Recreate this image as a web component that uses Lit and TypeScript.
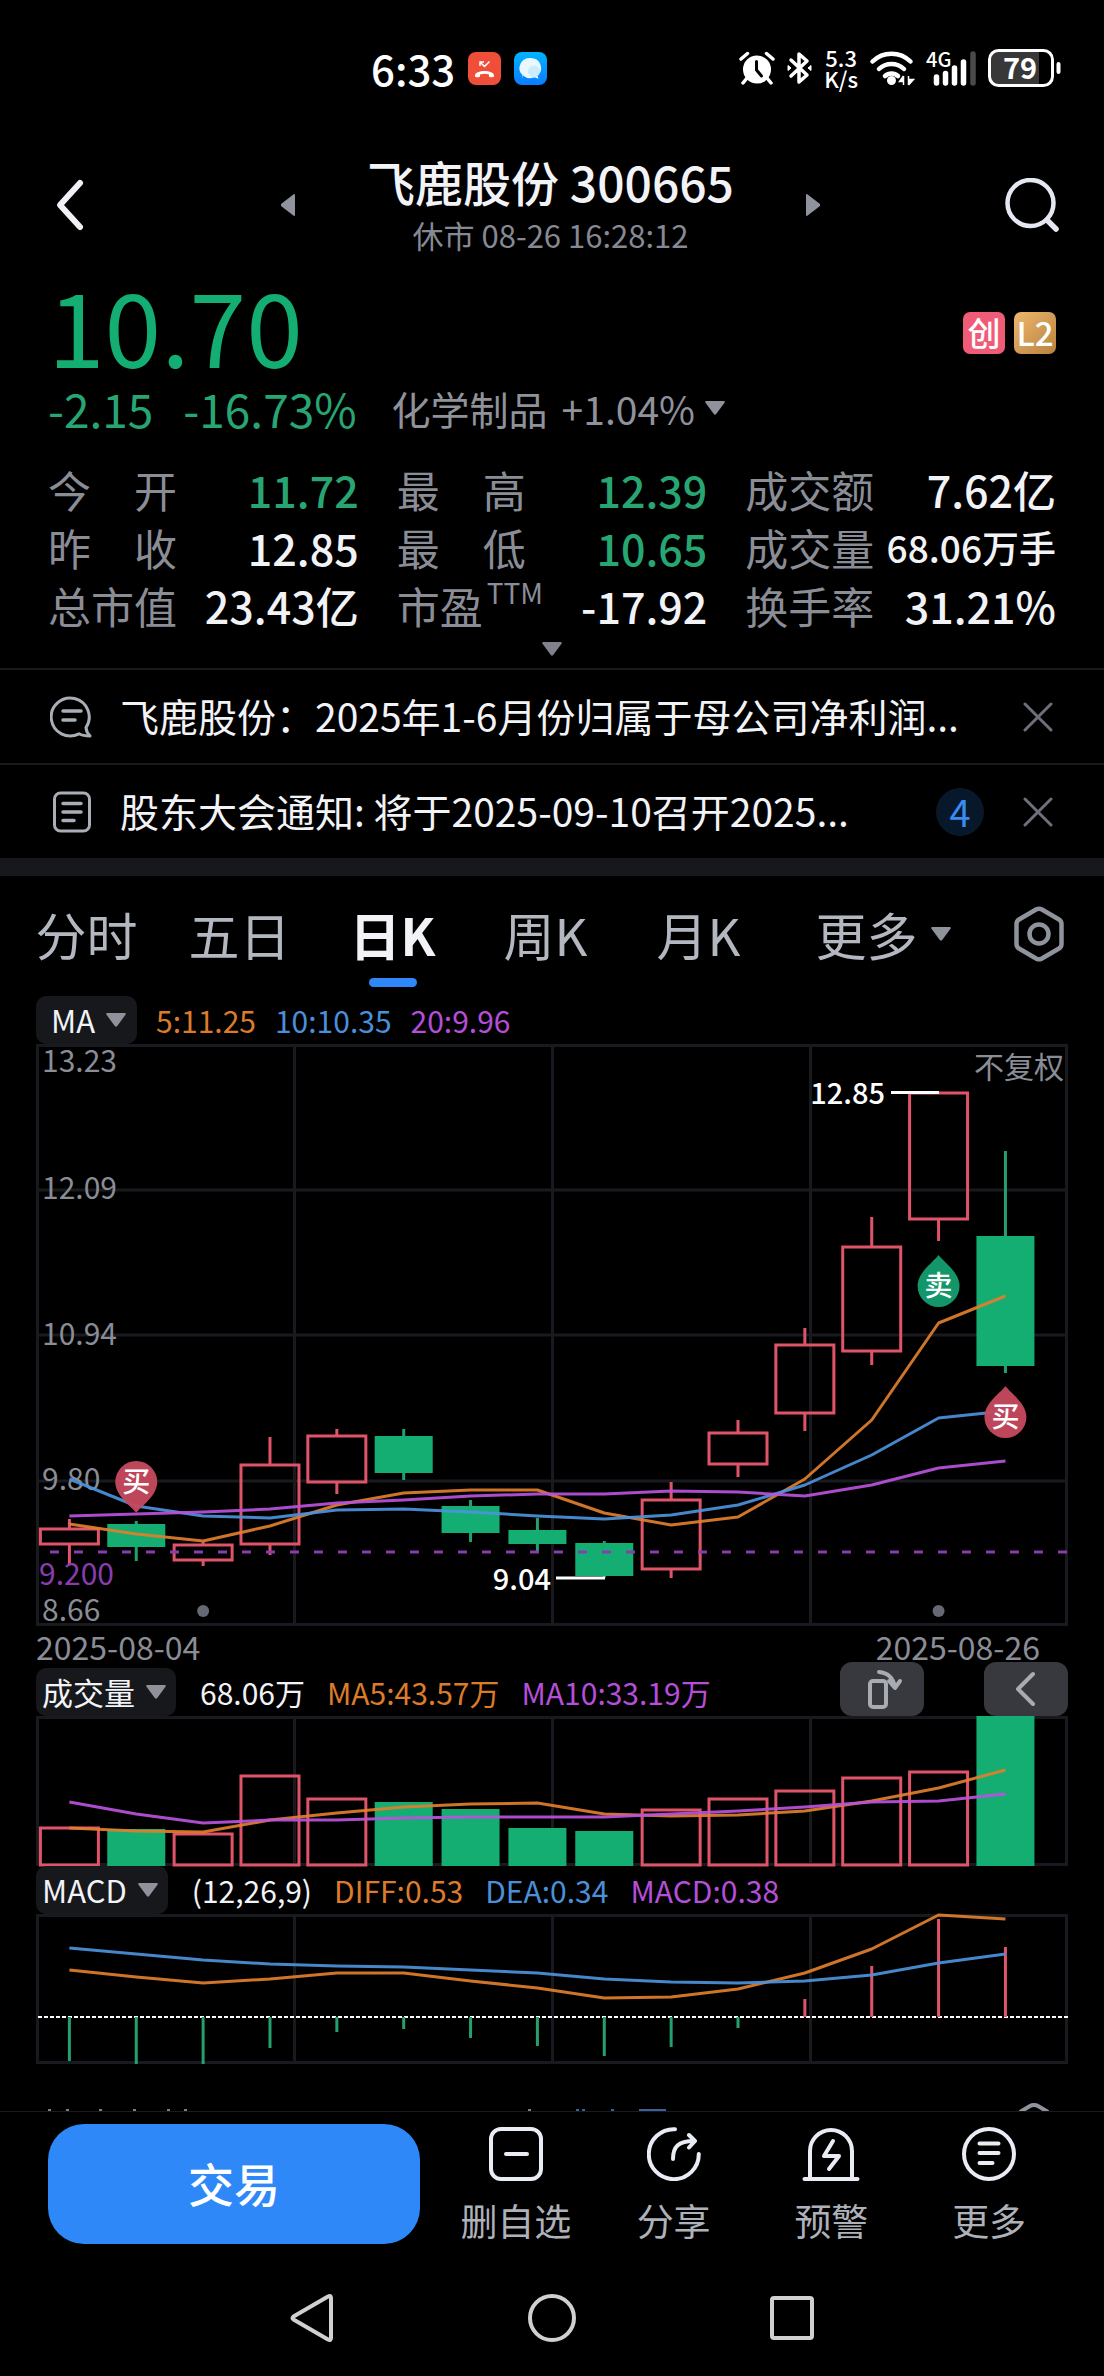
import { LitElement, html, svg, css } from "lit";
import { customElement, property, state } from "lit/decorators.js";
import { classMap } from "lit/directives/class-map.js";

type Tone = "up" | "down" | "plain";

interface Candle {
  rise: boolean;
  top: number;
  bottom: number;
  high: number;
  low: number;
}

const WIDTH = 1032;
const STEP = 66.86;
const FIRST = 33.4;
const centre = (i: number) => FIRST + STEP * i;

const candle = (rise: boolean, top: number, bottom: number, high: number, low: number): Candle => ({
  rise,
  top,
  bottom,
  high,
  low,
});

const CANDLES: Candle[] = [
  candle(true, 485, 500, 475, 520),
  candle(false, 480, 503, 477, 517),
  candle(true, 501, 516, 498, 522),
  candle(true, 421, 500, 393, 511),
  candle(true, 392, 438, 385, 450),
  candle(false, 392, 429, 385, 436),
  candle(false, 462, 489, 456, 498),
  candle(false, 486, 500, 474, 507),
  candle(false, 499, 532, 497, 534),
  candle(true, 456, 525, 438, 534),
  candle(true, 389, 420, 376, 433),
  candle(true, 301, 369, 284, 387),
  candle(true, 203, 307, 173, 321),
  candle(true, 49, 175, 49, 197),
  candle(false, 192, 322, 107, 329),
];

const MA5 = [480, 490, 497, 482, 461, 449, 446, 446, 469, 481, 473, 435, 376, 279, 252];
const MA10 = [435, 462, 472, 474, 466, 465, 468, 472, 475, 471, 461, 441, 411, 374, 367];
const MA20 = [472, 470, 468, 465, 459, 456, 452, 450, 450, 447, 448, 452, 441, 424, 417];

const VOLUME_TOPS = [112, 113, 118, 60, 83, 86, 93, 112, 115, 94, 83, 75, 62, 56, 0];
const VOLUME_MA5 = [112, 115, 116, 104, 97, 91, 88, 87, 98, 100, 99, 95, 85, 72, 54];
const VOLUME_MA10 = [86, 98, 107, 104, 104, 102, 101, 101, 101, 98, 95, 91, 86, 85, 78];

const DIFF = [56, 63, 69, 65, 59, 59, 67, 74, 84, 83, 75, 59, 35, 1, 5];
const DEA = [34, 40, 46, 50, 52, 53, 56, 59, 65, 68, 69, 67, 61, 49, 40];
const MACD_ZERO = 103;
const MACD_ENDS = [147, 150, 150, 134, 118, 115, 124, 132, 142, 133, 114, 85, 52, 5, 33];

const STATS: { label: string; sup?: string; value: string; tone: Tone; small?: boolean }[] = [
  { label: "今　开", value: "11.72", tone: "down" },
  { label: "最　高", value: "12.39", tone: "down" },
  { label: "成交额", value: "7.62亿", tone: "plain" },
  { label: "昨　收", value: "12.85", tone: "plain" },
  { label: "最　低", value: "10.65", tone: "down" },
  { label: "成交量", value: "68.06万手", tone: "plain", small: true },
  { label: "总市值", value: "23.43亿", tone: "plain" },
  { label: "市盈", sup: "TTM", value: "-17.92", tone: "plain" },
  { label: "换手率", value: "31.21%", tone: "plain" },
];

const chartStyles = css`
  :host {
    display: block;
  }
  svg {
    display: block;
    width: 100%;
    height: auto;
    overflow: visible;
  }
  .grid {
    fill: none;
    stroke: #191a1f;
    stroke-width: 3;
  }
  .rise {
    fill: none;
    stroke: #e0546a;
    stroke-width: 3;
  }
  .fall {
    fill: #14ae73;
  }
  .fall-wick {
    stroke: #24a06f;
    stroke-width: 3;
  }
  .line {
    fill: none;
    stroke-width: 3;
    stroke-linejoin: round;
    opacity: 0.92;
  }
  .orange {
    stroke: #e07f2c;
  }
  .blue {
    stroke: #4c93dc;
  }
  .purple {
    stroke: #b953dc;
  }
`;

const polyline = (values: number[], colour: string) => svg`
  <polyline class="line ${colour}" points=${values.map((y, i) => `${centre(i)},${y}`).join(" ")}></polyline>`;

const verticals = (height: number) => [258, 516, 774].map(
  (x) => svg`<line class="grid" x1=${x + 0.5} x2=${x + 0.5} y1="0" y2=${height}></line>`,
);

const frame = (height: number) => svg`
  <rect class="grid" x="1.5" y="1.5" width=${WIDTH - 3} height=${height - 3}></rect>`;

const triangle = (className = "tri") => html`
  <svg class=${className} viewBox="0 0 20 14" width="20" height="14" aria-hidden="true">
    <path d="M1.500 0h17q2 0 1 1.800L11.200 13q-1.200 1.300-2.400 0L.5 1.800Q-.5 0 1.500 0z" fill="currentColor"></path>
  </svg>`;

@customElement("price-chart")
export class PriceChart extends LitElement {
  static styles = [
    chartStyles,
    css`
      text {
        font-family: "Noto Sans CJK SC", sans-serif;
        font-size: 30px;
      }
      .axis {
        fill: #8a8d96;
      }
      .level {
        fill: #8a3cae;
      }
      .level-line {
        stroke: #8a3cae;
        stroke-width: 3;
        stroke-dasharray: 9 15;
      }
      .peak {
        fill: #ffffff;
        font-size: 29px;
        font-weight: 500;
      }
      .peak-line {
        stroke: #ffffff;
        stroke-width: 3;
      }
      .dot {
        fill: #666873;
      }
      .pin-text {
        fill: #ffffff;
        font-size: 28px;
        font-weight: 500;
      }
      .buy {
        fill: #c5495f;
        opacity: 0.96;
      }
      .sell {
        fill: #13966a;
      }
    `,
  ];

  private pin(x: number, y: number, kind: "buy" | "sell", label: string, up: boolean) {
    const d = up
      ? "M0-31C4-25 21-14 21 0A21 21 0 0 1-21 0C-21-14-4-25 0-31z"
      : "M0 31C4 25 21 14 21 0A21 21 0 0 0-21 0C-21 14-4 25 0 31z";
    return svg`
      <g transform="translate(${x} ${y})">
        <path class=${kind} d=${d}></path>
        <text class="pin-text" text-anchor="middle" y="10">${label}</text>
      </g>`;
  }

  render() {
    return html`
      <svg viewBox="0 0 ${WIDTH} 582" role="img" aria-label="日K">
        ${frame(582)} ${verticals(582)}
        ${[146, 291, 437].map((y) => svg`<line class="grid" x1="0" x2=${WIDTH} y1=${y} y2=${y}></line>`)}
        <text class="axis" x="6" y="28">13.23</text>
        <text class="axis" x="6" y="155">12.09</text>
        <text class="axis" x="6" y="301">10.94</text>
        <text class="axis" x="6" y="446">9.80</text>
        <text class="axis" x="6" y="577">8.66</text>
        <text class="axis" x="1028" y="34" text-anchor="end">不复权</text>
        ${CANDLES.map((c, i) => {
          const x = centre(i);
          return c.rise
            ? svg`
                <rect class="rise" x=${x - 29} y=${c.top} width="58" height=${c.bottom - c.top}></rect>
                <line class="rise" x1=${x} x2=${x} y1=${c.high} y2=${c.top}></line>
                <line class="rise" x1=${x} x2=${x} y1=${c.bottom} y2=${c.low}></line>`
            : svg`
                <line class="fall-wick" x1=${x} x2=${x} y1=${c.high} y2=${c.low}></line>
                <rect class="fall" x=${x - 29} y=${c.top} width="58" height=${c.bottom - c.top}></rect>`;
        })}
        ${polyline(MA5, "orange")} ${polyline(MA10, "blue")} ${polyline(MA20, "purple")}
        <line class="level-line" x1="14" x2=${WIDTH} y1="508" y2="508"></line>
        <text class="level" x="3" y="541">9.200</text>
        <line class="peak-line" x1="855" x2="903" y1="48.500" y2="48.500"></line>
        <text class="peak" x="849" y="60" text-anchor="end">12.85</text>
        <line class="peak-line" x1="520" x2="569" y1="534" y2="534"></line>
        <text class="peak" x="515" y="546" text-anchor="end">9.04</text>
        <circle class="dot" cx=${centre(2)} cy="567" r="6"></circle>
        <circle class="dot" cx=${centre(13)} cy="567" r="6"></circle>
        ${this.pin(centre(1), 438, "buy", "买", false)}
        ${this.pin(centre(13), 242, "sell", "卖", true)}
        ${this.pin(centre(14), 373, "buy", "买", true)}
      </svg>`;
  }
}

@customElement("volume-chart")
export class VolumeChart extends LitElement {
  static styles = chartStyles;

  render() {
    return html`
      <svg viewBox="0 0 ${WIDTH} 150" role="img" aria-label="成交量">
        ${frame(150)} ${verticals(150)}
        ${VOLUME_TOPS.map((top, i) =>
          CANDLES[i].rise
            ? svg`<rect class="rise" x=${centre(i) - 29} y=${top} width="58" height=${149 - top}></rect>`
            : svg`<rect class="fall" x=${centre(i) - 29} y=${top} width="58" height=${150 - top}></rect>`,
        )}
        ${polyline(VOLUME_MA5, "orange")} ${polyline(VOLUME_MA10, "purple")}
      </svg>`;
  }
}

@customElement("macd-chart")
export class MacdChart extends LitElement {
  static styles = [
    chartStyles,
    css`
      .zero {
        stroke: #ffffff;
        stroke-width: 2;
        stroke-dasharray: 4 2;
      }
    `,
  ];

  render() {
    return html`
      <svg viewBox="0 0 ${WIDTH} 150" role="img" aria-label="MACD">
        ${frame(150)} ${verticals(150)}
        <line class="zero" x1="2" x2=${WIDTH} y1=${MACD_ZERO} y2=${MACD_ZERO}></line>
        ${MACD_ENDS.map(
          (end, i) => svg`
            <line class=${end < MACD_ZERO ? "rise" : "fall-wick"}
              x1=${centre(i)} x2=${centre(i)} y1=${MACD_ZERO} y2=${end}></line>`,
        )}
        ${polyline(DIFF, "orange")} ${polyline(DEA, "blue")}
      </svg>`;
  }
}

@customElement("status-bar")
export class StatusBar extends LitElement {
  static styles = css`
    :host {
      display: flex;
      align-items: center;
      justify-content: space-between;
      height: 136px;
      padding: 0 43px 0 33.6%;
      box-sizing: border-box;
      color: #ffffff;
    }
    .group {
      display: flex;
      align-items: center;
    }
    .left {
      gap: 13px;
    }
    .right {
      gap: 12px;
    }
    .time {
      font-size: 42px;
      line-height: 50px;
      font-weight: 500;
    }
    .speed {
      display: flex;
      flex-direction: column;
      align-items: center;
      font-size: 22px;
      line-height: 21px;
      font-weight: 500;
    }
    svg {
      display: block;
      overflow: visible;
    }
    .small {
      font-family: "Noto Sans CJK SC", sans-serif;
      font-size: 20px;
      font-weight: 500;
      fill: #ffffff;
    }
    .level {
      font-family: "Noto Sans CJK SC", sans-serif;
      font-size: 29px;
      font-weight: 700;
      fill: #ffffff;
    }
  `;

  render() {
    return html`
      <div class="group left">
        <span class="time">6:33</span>
        <svg width="33" height="33" viewBox="0 0 33 33" aria-hidden="true">
          <rect width="33" height="33" rx="8" fill="#f04e38"></rect>
          <path d="M7 23.500c0-6 19-6 19 0v1c0 1-5 1-5 0v-2q-4.500-1.500-9 0v2c0 1-5 1-5 0z" fill="#fff"></path>
          <path d="M12 14v-4h4M12.500 10.500l4 4 5-5" fill="none" stroke="#fff" stroke-width="1.500"></path>
        </svg>
        <svg width="33" height="33" viewBox="0 0 33 33" aria-hidden="true">
          <defs>
            <linearGradient id="chat" x1="0" y1="0" x2="0" y2="1">
              <stop offset="0" stop-color="#00b4ff"></stop>
              <stop offset="1" stop-color="#0a7cff"></stop>
            </linearGradient>
          </defs>
          <rect width="33" height="33" rx="8" fill="url(#chat)"></rect>
          <path d="M16.500 6a10.500 10 0 0 1 7 17.500l1 3.200-4.200-1.500A10.500 10 0 0 1 9 23.500L8 26.500l.5-3.500A10.500 10 0 0 1 16.500 6z" fill="#e9f7ff"></path>
          <circle cx="20" cy="19.500" r="6" fill="#bfe6ff" opacity=".7"></circle>
        </svg>
      </div>
      <div class="group right">
        <svg width="36" height="34" viewBox="0 0 36 34" aria-hidden="true">
          <circle cx="18" cy="18.500" r="14" fill="#fff"></circle>
          <path d="M2 8l6.500-5.500M34 8l-6.500-5.500M8 27l-4 5M28 27l4 5" stroke="#fff" stroke-width="3.500" stroke-linecap="round"></path>
          <path d="M17.500 10.500V19l5 6" fill="none" stroke="#000" stroke-width="3" stroke-linecap="round" stroke-linejoin="round"></path>
        </svg>
        <svg width="25" height="34" viewBox="0 0 25 34" aria-hidden="true">
          <path d="M4 9l16 15-8 7V3l8 7L4 25" fill="none" stroke="#fff" stroke-width="3.500" stroke-linejoin="round" stroke-linecap="round"></path>
          <path d="M1 14.500l3 2.500-3 2.500zM24 14.500L21 17l3 2.500z" fill="#fff" stroke="#fff"></path>
        </svg>
        <span class="speed"><span>5.3</span><span>K/s</span></span>
        <svg width="44" height="34" viewBox="0 0 44 34" aria-hidden="true">
          <path d="M2.500 10.500a27 27 0 0 1 38 0M9 18a18 18 0 0 1 25 0M15 25a9.500 9.500 0 0 1 13 0" fill="none" stroke="#fff" stroke-width="4.500" stroke-linecap="round"></path>
          <circle cx="21.500" cy="29.500" r="4.500" fill="#fff"></circle>
          <path d="M33.500 25v9M33.500 25l-4 5.500h4M38.500 34v-9M38.500 34l5-5.500h-5" stroke="#fff" stroke-width="1.500" fill="#fff"></path>
        </svg>
        <svg width="50" height="36" viewBox="0 0 50 36" role="img" aria-label="4G">
          <text class="small" x="0" y="17">4G</text>
          <path d="M10.500 27v6M19.500 23.500v9.500M28.500 18v15M37.500 12v21" stroke="#fff" stroke-width="5.500" stroke-linecap="round"></path>
          <path d="M47 4v29" stroke="#4a4a4a" stroke-width="5.500" stroke-linecap="round"></path>
        </svg>
        <svg width="73" height="38" viewBox="0 0 73 38" role="img" aria-label="79%">
          <path d="M10 2h41v34H10a8 8 0 0 1-8-8V10a8 8 0 0 1 8-8z" fill="#383838"></path>
          <rect x="1.500" y="1.500" width="63" height="35" rx="9" fill="none" stroke="#fff" stroke-width="3"></rect>
          <rect x="68.500" y="13" width="4" height="12" rx="2" fill="#fff"></rect>
          <text class="level" x="32" y="30" text-anchor="middle">79</text>
        </svg>
      </div>`;
  }
}

@customElement("notice-row")
export class NoticeRow extends LitElement {
  static styles = css`
    :host {
      display: flex;
      align-items: center;
      height: 93px;
      padding: 0 50px;
      border-top: 2px solid #191a1e;
    }
    .icon {
      flex: none;
      width: 42px;
      height: 42px;
      margin-right: 28px;
      color: #a9adb5;
    }
    .title {
      flex: 1;
      min-width: 0;
      padding-bottom: 4px;
      overflow: hidden;
      white-space: nowrap;
      color: #f2f3f7;
      font-size: 39px;
      line-height: 56px;
      text-decoration: none;
    }
    .count {
      flex: none;
      width: 48px;
      height: 48px;
      margin-right: 38px;
      border-radius: 24px;
      background: #08182b;
      color: #3a8bf0;
      font-size: 38px;
      line-height: 46px;
      text-align: center;
    }
    .close {
      flex: none;
      display: grid;
      place-items: center;
      width: 32px;
      height: 48px;
      padding: 0;
      border: 0;
      background: none;
      color: #6d707a;
    }
  `;

  @property() kind = "comment";
  @property() text = "";
  @property() count = "";

  render() {
    return html`
      ${this.kind === "comment"
        ? html`<svg class="icon" viewBox="0 0 42 42" aria-hidden="true">
            <path d="M36 31.500A19 19 0 1 0 29 37.800Q33 40 40 40 36.500 37 36 31.500z" fill="none" stroke="currentColor" stroke-width="3" stroke-linejoin="round"></path>
            <path d="M13 15h18M13 24h12" stroke="currentColor" stroke-width="3.500" stroke-linecap="round"></path>
          </svg>`
        : html`<svg class="icon" viewBox="0 0 42 42" aria-hidden="true">
            <rect x="4.500" y="2" width="35" height="38" rx="6" fill="none" stroke="currentColor" stroke-width="3"></rect>
            <path d="M13 12.500h18M13 21h18M13 29.500h11" stroke="currentColor" stroke-width="3.500" stroke-linecap="round"></path>
          </svg>`}
      <a class="title" href="#notice">${this.text}</a>
      ${this.count ? html`<span class="count">${this.count}</span>` : ""}
      <button class="close" aria-label="关闭">
        <svg width="30" height="30" viewBox="0 0 30 30" aria-hidden="true">
          <path d="M2 2l26 26M28 2L2 28" stroke="currentColor" stroke-width="3" stroke-linecap="round"></path>
        </svg>
      </button>`;
  }
}

@customElement("app-root")
export class AppRoot extends LitElement {
  static styles = css`
    :host {
      display: flex;
      flex-direction: column;
      min-height: 100vh;
      background: #000000;
      color: #f2f3f7;
      font-family: "Noto Sans CJK SC", "Noto Sans", sans-serif;
    }
    button {
      margin: 0;
      padding: 0;
      border: 0;
      background: none;
      color: inherit;
      font: inherit;
    }
    svg {
      display: block;
      flex: none;
    }
    .header {
      display: flex;
      align-items: center;
      justify-content: space-between;
      height: 138px;
      padding: 0 45px 0 48px;
    }
    .switcher {
      display: flex;
      align-items: center;
      gap: 72px;
      color: #8f939d;
    }
    .heading {
      display: flex;
      flex-direction: column;
      align-items: center;
    }
    .name {
      margin: 0;
      color: #f2f3f7;
      font-size: 48px;
      line-height: 60px;
      font-weight: 500;
      white-space: nowrap;
    }
    .time {
      color: #868993;
      font-size: 31px;
      line-height: 48px;
      white-space: nowrap;
    }
    .quote {
      display: flex;
      justify-content: space-between;
      padding: 0 48px;
    }
    .price {
      color: #14ae73;
      font-size: 102px;
      line-height: 100px;
    }
    .badges {
      display: flex;
      gap: 9px;
      padding-top: 38px;
    }
    .badge {
      width: 42px;
      height: 42px;
      border-radius: 7px;
      color: #ffffff;
      font-size: 33px;
      line-height: 40px;
      font-weight: 500;
      text-align: center;
    }
    .board {
      background: #f05b78;
    }
    .depth {
      background: linear-gradient(135deg, #efb66c, #b8833f);
    }
    .change {
      display: flex;
      align-items: center;
      height: 68px;
      padding: 0 48px;
      color: #27a673;
      font-size: 46px;
    }
    .amount {
      margin-right: 30px;
    }
    .sector {
      display: flex;
      align-items: center;
      gap: 10px;
      margin-left: 35px;
      color: #8f929b;
      font-size: 39px;
    }
    .sector-name {
      margin-right: 4px;
    }
    .stats {
      display: grid;
      grid-template-columns: repeat(3, 1fr);
      column-gap: 38px;
      margin: 18px 0 0;
      padding: 0 48px;
    }
    .stat {
      display: flex;
      align-items: center;
      justify-content: space-between;
      height: 58px;
      white-space: nowrap;
    }
    .label {
      color: #8a8d96;
      font-size: 43px;
      line-height: 58px;
    }
    .sup {
      font-size: 28px;
      line-height: 28px;
      vertical-align: 20px;
      margin-left: 4px;
    }
    .value {
      margin: 0;
      font-size: 43px;
      line-height: 58px;
      font-weight: 500;
    }
    .compact {
      font-size: 37px;
    }
    .down {
      color: #27a673;
    }
    .expand {
      display: grid;
      place-items: center;
      width: 100%;
      height: 34px;
      padding-bottom: 4px;
      color: #7f828d;
    }
    .band {
      height: 18px;
      background: #17181c;
    }
    .tabs {
      display: grid;
      grid-template-columns: repeat(5, 153fr) 216fr 95fr;
      height: 120px;
      padding: 0 18px 0 10px;
    }
    .tab {
      display: flex;
      flex-direction: column;
      align-items: center;
      gap: 6px;
      padding-top: 20px;
      color: #b3b7c0;
      font-size: 51px;
      line-height: 76px;
      white-space: nowrap;
    }
    .tab::after {
      content: "";
      width: 48px;
      height: 9px;
      border-radius: 5px;
    }
    .active {
      color: #f2f3f7;
      font-weight: 700;
    }
    .active::after {
      background: #2f88f7;
    }
    .more {
      display: flex;
      align-items: center;
      gap: 13px;
      color: #8f929b;
    }
    .more-text {
      color: #b3b7c0;
    }
    .settings {
      display: grid;
      place-items: center;
      height: 116px;
      color: #8f939c;
    }
    .charts {
      padding: 0 36px;
    }
    .legend {
      display: flex;
      height: 48px;
      font-size: 30px;
      line-height: 48px;
      white-space: nowrap;
    }
    .picker {
      display: flex;
      align-items: center;
      gap: 11px;
      padding: 0 10px 0 6px;
      border-radius: 10px;
      background: #17181c;
      color: #f2f3f7;
      font-size: 31px;
      line-height: 46px;
    }
    .picker-wide {
      padding: 0 11px 0 15px;
    }
    .picker .tri,
    .more .tri {
      color: #8f929b;
    }
    .readings {
      display: flex;
      gap: 22px;
      margin-left: 24px;
    }
    .readings-near {
      gap: 19px;
      margin-left: 19px;
    }
    .orange {
      color: #dc7c2b;
    }
    .blue {
      color: #4a90d9;
    }
    .purple {
      color: #b54fd9;
    }
    .dates {
      display: flex;
      justify-content: space-between;
      height: 42px;
      padding-right: 28px;
      color: #8a8d96;
      font-size: 32px;
      line-height: 40px;
    }
    .tools {
      display: flex;
      align-items: flex-end;
      gap: 60px;
      margin-left: auto;
    }
    .tool {
      width: 84px;
      height: 54px;
      border-radius: 12px;
      background: #38393e;
      color: #a9abb2;
    }
    .peek {
      flex: 1;
      display: flex;
      align-items: flex-end;
      min-height: 47px;
    }
    .peek svg {
      width: 100%;
      height: auto;
    }
    .footer {
      display: flex;
      gap: 17px;
      padding: 12px 36px 14px 48px;
      border-top: 1px solid #191a1e;
    }
    .trade {
      flex: 372;
      height: 120px;
      padding-bottom: 5px;
      border-radius: 36px;
      background: #2e88f7;
      color: #ffffff;
      font-size: 46px;
      font-weight: 500;
    }
    .actions {
      flex: 631;
      display: grid;
      grid-template-columns: repeat(4, 1fr);
    }
    .action {
      display: flex;
      flex-direction: column;
      align-items: center;
      gap: 14px;
      padding-top: 3px;
      color: #aeb1b9;
      font-size: 37px;
      line-height: 50px;
      white-space: nowrap;
    }
    .action svg {
      color: #e9ecf4;
    }
    .system {
      display: flex;
      align-items: center;
      justify-content: center;
      gap: 192px;
      height: 118px;
      color: #d0d0d0;
    }
  `;

  @state() private tab = "日K";

  private icon(width: number, paths: unknown) {
    return html`<svg width=${width} height="54" viewBox="0 0 ${width} 54" fill="none" stroke="currentColor"
      stroke-width="4" stroke-linecap="round" stroke-linejoin="round" aria-hidden="true">${paths}</svg>`;
  }

  render() {
    const tabs = ["分时", "五日", "日K", "周K", "月K"];
    return html`
      <status-bar></status-bar>
      <header class="header">
        <button aria-label="返回">
          <svg width="48" height="54" viewBox="0 0 48 54" aria-hidden="true">
            <path d="M32 5L12 27l20 22" fill="none" stroke="#f0f1f6" stroke-width="6" stroke-linecap="round" stroke-linejoin="round"></path>
          </svg>
        </button>
        <div class="switcher">
          <button aria-label="上一只">
            <svg width="14" height="22" viewBox="0 0 14 22" aria-hidden="true"><path d="M13 0q1 0 1 1v20q0 1-1 1L0 12q-.5-1 0-2z" fill="currentColor"></path></svg>
          </button>
          <div class="heading">
            <h1 class="name">飞鹿股份 300665</h1>
            <span class="time">休市 08-26 16:28:12</span>
          </div>
          <button aria-label="下一只">
            <svg width="14" height="22" viewBox="0 0 14 22" aria-hidden="true"><path d="M1 0Q0 0 0 1v20q0 1 1 1l13-10q.5-1 0-2z" fill="currentColor"></path></svg>
          </button>
        </div>
        <button aria-label="搜索">
          <svg width="54" height="54" viewBox="0 0 54 54" aria-hidden="true">
            <circle cx="25.500" cy="25" r="23" fill="none" stroke="#e4e8f0" stroke-width="4.500"></circle>
            <path d="M42 42l9 9" stroke="#e4e8f0" stroke-width="5.500" stroke-linecap="round"></path>
          </svg>
        </button>
      </header>

      <section class="quote">
        <span class="price">10.70</span>
        <span class="badges"><span class="badge board">创</span><span class="badge depth">L2</span></span>
      </section>
      <div class="change">
        <span class="amount">-2.15</span><span>-16.73%</span>
        <button class="sector"><span class="sector-name">化学制品</span><span>+1.04%</span>${triangle()}</button>
      </div>
      <dl class="stats">
        ${STATS.map(
          (s) => html`<div class="stat">
            <dt class="label">${s.label}${s.sup ? html`<span class="sup">${s.sup}</span>` : ""}</dt>
            <dd class=${classMap({ value: true, down: s.tone === "down", compact: !!s.small })}>${s.value}</dd>
          </div>`,
        )}
      </dl>
      <button class="expand" aria-label="展开">${triangle()}</button>

      <notice-row kind="comment" text="飞鹿股份：2025年1-6月份归属于母公司净利润..."></notice-row>
      <notice-row kind="document" text="股东大会通知: 将于2025-09-10召开2025..." count="4"></notice-row>
      <div class="band"></div>

      <nav class="tabs">
        ${tabs.map(
          (t) => html`<button class=${classMap({ tab: true, active: this.tab === t })} @click=${() => (this.tab = t)}>${t}</button>`,
        )}
        <button class="tab"><span class="more"><span class="more-text">更多</span>${triangle()}</span></button>
        <button class="settings" aria-label="设置">
          <svg width="50" height="56" viewBox="0 0 50 56" fill="none" stroke="currentColor" stroke-width="4.500" stroke-linejoin="round" aria-hidden="true">
            <path d="M22.500 3.300Q25 2 27.500 3.300L45 13.500Q47.500 15 47.500 18V38q0 3-2.500 4.500L27.500 52.700Q25 54 22.500 52.700L5 42.500Q2.500 41 2.500 38V18q0-3 2.500-4.500z"></path>
            <circle cx="25" cy="28" r="9.500"></circle>
          </svg>
        </button>
      </nav>

      <main class="charts">
        <div class="legend">
          <button class="picker picker-wide"><span>MA</span>${triangle()}</button>
          <span class="readings readings-near">
            <span class="orange">5:11.25</span><span class="blue">10:10.35</span><span class="purple">20:9.96</span>
          </span>
        </div>
        <price-chart></price-chart>
        <div class="dates"><span>2025-08-04</span><span>2025-08-26</span></div>

        <div class="legend">
          <button class="picker"><span>成交量</span>${triangle()}</button>
          <span class="readings">
            <span>68.06万</span><span class="orange">MA5:43.57万</span><span class="purple">MA10:33.19万</span>
          </span>
          <span class="tools">
            <button class="tool" aria-label="横屏">
              <svg width="84" height="54" viewBox="0 0 84 54" fill="none" stroke="currentColor" stroke-width="4" stroke-linecap="round" stroke-linejoin="round" aria-hidden="true">
                <rect x="30" y="19" width="16" height="26" rx="3"></rect>
                <path d="M39 10Q52 11 55 25M49 19l6 7 5-7"></path>
              </svg>
            </button>
            <button class="tool" aria-label="收起">
              <svg width="84" height="54" viewBox="0 0 84 54" fill="none" stroke="currentColor" stroke-width="4" stroke-linecap="round" stroke-linejoin="round" aria-hidden="true">
                <path d="M49 12L34 27l15 15"></path>
              </svg>
            </button>
          </span>
        </div>
        <volume-chart></volume-chart>

        <div class="legend">
          <button class="picker"><span>MACD</span>${triangle()}</button>
          <span class="readings">
            <span>(12,26,9)</span><span class="orange">DIFF:0.53</span><span class="blue">DEA:0.34</span><span class="purple">MACD:0.38</span>
          </span>
        </div>
        <macd-chart></macd-chart>
      </main>

      <div class="peek">
        <svg viewBox="0 0 1104 8" aria-hidden="true">
          <path d="M48 7h3M66 7h3M99 7h3M133 7h3M167 7h3M184 7h3M528 7h3" stroke="#7c7f88" stroke-width="2"></path>
          <path d="M576 7h3M582 7h3M611 7h3M639 7h27" stroke="#37649b" stroke-width="2"></path>
          <path d="M1020 9l10-6q4-2 8 0l10 6" fill="none" stroke="#8f939c" stroke-width="4"></path>
        </svg>
      </div>

      <footer class="footer">
        <button class="trade">交易</button>
        <div class="actions">
          <button class="action">
            ${this.icon(54, svg`<rect x="2" y="2" width="50" height="50" rx="10"></rect><path d="M17 27h21"></path>`)}
            <span>删自选</span>
          </button>
          <button class="action">
            ${this.icon(54, svg`<path d="M28 2.200A25 25 0 1 0 51.800 27M26 32C26 20 31 14 47 14M42 8l6 6-6 6.500"></path>`)}
            <span>分享</span>
          </button>
          <button class="action">
            ${this.icon(58, svg`<path d="M8 51V24a21 21 0 0 1 42 0v27M2.500 52h53M31 14l-9 15h15L27 42"></path>`)}
            <span>预警</span>
          </button>
          <button class="action">
            ${this.icon(54, svg`<circle cx="27" cy="27" r="25"></circle><path d="M17.500 16.500h19M17.500 26h19M17.500 36h13"></path>`)}
            <span>更多</span>
          </button>
        </div>
      </footer>
      <nav class="system">
        <button aria-label="返回">
          <svg width="48" height="48" viewBox="0 0 48 48" fill="none" stroke="currentColor" stroke-width="4" stroke-linejoin="round" aria-hidden="true">
            <path d="M40 2.500q3-1.500 3 1.500v40q0 3-3 1.500L5.500 25.500Q3.500 24 5.500 22.500z"></path>
          </svg>
        </button>
        <button aria-label="主页">
          <svg width="48" height="48" viewBox="0 0 48 48" fill="none" stroke="currentColor" stroke-width="4" aria-hidden="true">
            <circle cx="24" cy="24" r="22"></circle>
          </svg>
        </button>
        <button aria-label="最近任务">
          <svg width="48" height="48" viewBox="0 0 48 48" fill="none" stroke="currentColor" stroke-width="4" aria-hidden="true">
            <rect x="4" y="4" width="40" height="40" rx="2"></rect>
          </svg>
        </button>
      </nav>`;
  }
}
